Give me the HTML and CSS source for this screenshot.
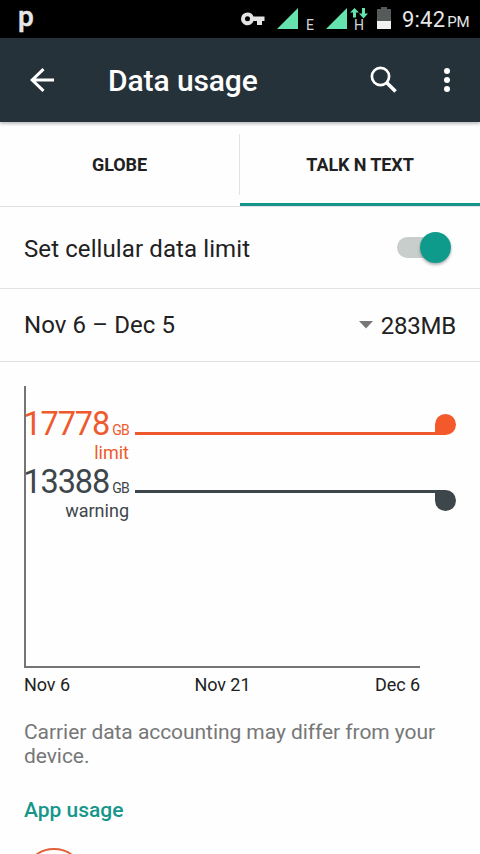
FILE: index.html
```html
<!DOCTYPE html>
<html lang="en">
<head>
<meta charset="utf-8">
<title>Data usage</title>
<link rel="stylesheet" href="styles.css">
</head>
<body>
<div class="status">
  <span class="status-app">p</span>
  <svg class="key" width="24" height="14" viewBox="0 0 24 14"><path fill="#e4e4e4" fill-rule="evenodd" d="M6.500 .5a6.400 6.400 0 1 0 6 8.500H16v4h5V9h2.500V4.500h-11A6.400 6.400 0 0 0 6.500 .5zM6.500 4.300a2.500 2.500 0 1 1 0 5a2.500 2.500 0 0 1 0-5z"/></svg>
  <svg class="signal" width="21" height="21" viewBox="0 0 21 21"><path fill="#64e3ae" d="M21 0v21H0z"/></svg>
  <span class="net net-e">E</span>
  <svg class="signal signal-two" width="21" height="21" viewBox="0 0 21 21"><path fill="#64e3ae" d="M21 0v21H0z"/></svg>
  <span class="mobile">
    <svg width="18" height="11" viewBox="0 0 18 11"><path fill="#64e3ae" d="M4.500 0L9 4.500H6V9.500H3V4.500H0zM12 0h3v5.500h3L13.500 10.500L9 5.500h3z"/></svg>
    <span class="net">H</span>
  </span>
  <svg class="battery" width="14" height="22" viewBox="0 0 14 22"><path fill="#555a5a" d="M4 0h6v2h4v12H0V2h4z"/><path fill="#f1f1f1" d="M0 14h14v8H0z"/></svg>
  <span class="clock">9:42<small>PM</small></span>
</div>
<header class="bar">
  <svg class="back" width="24" height="24" viewBox="0 0 24 24" fill="none" stroke="#fff" stroke-width="3"><path d="M24 12H3M13.500 1.200L2.200 12L13.500 22.800"/></svg>
  <h1>Data usage</h1>
  <svg class="search" width="28" height="28" viewBox="0 0 28 28" fill="none" stroke="#fff"><circle cx="10.500" cy="10.500" r="8.600" stroke-width="2.700"/><path stroke-width="3.600" d="M16.800 16.800L25.600 25.600"/></svg>
  <svg class="more" width="6" height="26" viewBox="0 0 6 26" fill="#fff"><circle cx="3" cy="4" r="3"/><circle cx="3" cy="13" r="3"/><circle cx="3" cy="22" r="3"/></svg>
</header>
<nav class="tabs">
  <div class="tab"><span>GLOBE</span></div>
  <div class="tab active"><span>TALK N TEXT</span></div>
</nav>
<div class="row limit-row">
  <span class="limit-label">Set cellular data limit</span>
  <span class="switch"><span class="thumb"></span></span>
</div>
<div class="row cycle-row">
  <span class="cycle">Nov 6 – Dec 5</span>
  <svg width="14" height="8" viewBox="0 0 14 8"><path fill="#777" d="M0 0h14L7 7.500z"/></svg>
  <span class="total">283MB</span>
</div>
<section class="chart">
  <div class="sweep over">
    <div class="amount"><b>17778</b><small>GB</small></div>
    <div class="name">limit</div>
    <div class="line"><i></i></div>
  </div>
  <div class="sweep warn">
    <div class="amount"><b>13388</b><small>GB</small></div>
    <div class="name">warning</div>
    <div class="line"><i></i></div>
  </div>
</section>
<div class="axis"><span>Nov 6</span><span>Nov 21</span><span>Dec 6</span></div>
<p class="note">Carrier data accounting may differ from your device.</p>
<h2>App usage</h2>
<div class="app"><svg width="62" height="6" viewBox="0 0 62 6"><circle cx="31" cy="31.500" r="30.500" fill="none" stroke="#e2603b" stroke-width="1.800"/></svg></div>
</body>
</html>
```
FILE: styles.css
```css
* { box-sizing: border-box; }
html, body { margin: 0; height: 854px; overflow: hidden; }
body { background: #fefefe; color: #212121; font-family: Roboto, sans-serif; }
svg { display: block; flex: none; }

.status { display: flex; height: 38px; background: #000; color: #e6e6e6; }
.status-app { width: 223px; padding-left: 18px; font: 500 28px/33px Roboto, sans-serif; -webkit-text-stroke: .5px; flex: none; }
.key { margin: 12px 0 0 18px; }
.signal { margin: 8px 0 0 12px; }
.net { font: 14px/14px Roboto, sans-serif; color: #d5d5d5; }
.net-e { width: 8px; margin: 18px 0 0 8px; }
.signal-two { margin-left: 12px; }
.mobile { display: flex; flex-direction: column; align-items: center; width: 18px; margin: 8px 0 0 3px; }
.mobile .net { margin-top: -1px; }
.battery { margin: 7px 0 0 9px; }
.clock { margin-left: 11px; font-size: 22px; line-height: 39px; letter-spacing: .2px; white-space: nowrap; }
.clock small { margin-left: 2px; font-size: 15px; letter-spacing: -.3px; }

.bar { display: flex; align-items: center; height: 84px; padding: 0 30px; background: #263239; color: #fff; position: relative; box-shadow: 0 2px 3px rgba(0, 0, 0, .25); }
h1 { flex: 1; margin: 2px 0 0 54px; font-size: 30px; font-weight: 500; line-height: 36px; letter-spacing: -.1px; }
.search { margin-right: 46px; }

.tabs { display: flex; height: 85px; padding-top: 12px; border-bottom: 1px solid #e2e2e2; }
.tab { flex: 0 0 240px; display: flex; justify-content: center; font-size: 18px; font-weight: 700; line-height: 61px; letter-spacing: -.1px; }
.tab:first-child { height: 61px; border-right: 1px solid #e2e2e2; }
.active { border-bottom: 3px solid #16968a; height: 72px; }

.row { display: flex; align-items: center; padding: 0 24px; border-bottom: 1px solid #e2e2e2; font-size: 24px; }
.limit-row { height: 82px; padding-top: 2px; }
.limit-label, .cycle { flex: 1; letter-spacing: .1px; }
.switch { width: 54px; height: 21px; margin: -2px 5px 0 0; display: flex; align-items: center; justify-content: flex-end; background: linear-gradient(90deg, #c7cecb 36px, transparent 36px); border-radius: 11px; }
.thumb { width: 31px; height: 31px; border-radius: 50%; background: #0e9b8b; box-shadow: 0 2px 3px rgba(0, 0, 0, .3); flex: none; }
.cycle-row { height: 73px; }
.total { margin: 2px 0 0 8px; letter-spacing: -.2px; }

.chart { width: 396px; height: 282px; margin: 24px 0 0 24px; padding-top: 19px; border-left: 2px solid #757575; border-bottom: 2px solid #757575; }
.sweep { display: grid; grid-template: 34px 24px / 105px 321px; column-gap: 6px; width: 432px; margin-left: -2px; color: #3d464b; }
.over { color: #ee5a2d; }
.amount { display: flex; justify-content: flex-end; align-items: baseline; line-height: 38px; }
.amount b { font-size: 32.500px; font-weight: 400; letter-spacing: -1.100px; }
.amount small { font-size: 14px; margin-left: 3px; letter-spacing: -.7px; }
.name { grid-row: 2; text-align: right; font-size: 18px; line-height: 28px; }
.line { grid-column: 2; grid-row: 1; height: 30px; display: flex; align-items: flex-end; }
.line::before { content: ""; flex: 1; height: 3px; background: currentColor; }
.line i { width: 21px; height: 21px; background: currentColor; border-radius: 50% 50% 50% 0; }
.over .line i { background: #f4592b; }
.warn .line i { margin-bottom: -18px; border-radius: 0 50% 50% 50%; }

.axis { display: flex; justify-content: space-between; width: 396px; margin: 6px 0 0 24px; font-size: 18px; line-height: 22px; letter-spacing: -.05px; }
.note { width: 432px; margin: 24px 0 0 24px; font-size: 21px; line-height: 24px; letter-spacing: -.06px; color: #777; }
h2 { margin: 30px 0 0 24px; font-size: 21px; font-weight: 500; line-height: 24px; color: #16968a; }
.app { margin: 26px 0 0 23px; }
```
